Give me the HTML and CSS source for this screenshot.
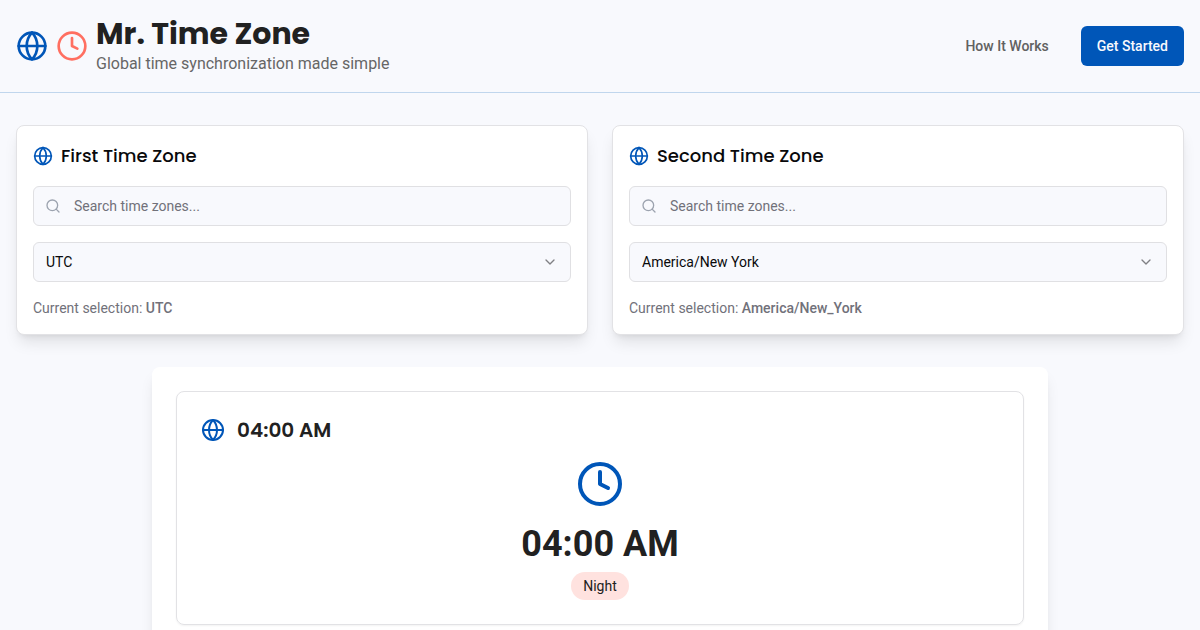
FILE: index.html
```html
<!DOCTYPE html>
<html lang="en">
  <head>
    <meta charset="UTF-8" />
    <meta name="viewport" content="width=device-width, initial-scale=1" />
    <title>Mr. Time Zone</title>
    <link rel="stylesheet" href="styles.css">
  </head>
  <body>
    <svg class="sprite" aria-hidden="true">
      <symbol id="globe" viewBox="0 0 24 24">
        <circle cx="12" cy="12" r="10" />
        <path d="M12 2a14.5 14.5 0 0 0 0 20 14.5 14.5 0 0 0 0-20" />
        <path d="M2 12h20" />
      </symbol>
      <symbol id="clock" viewBox="0 0 24 24">
        <circle cx="12" cy="12" r="10" />
        <polyline points="12 6 12 12 16 14" />
      </symbol>
      <symbol id="search" viewBox="0 0 24 24">
        <circle cx="11" cy="11" r="8" />
        <path d="m21 21-4.3-4.3" />
      </symbol>
      <symbol id="chevron" viewBox="0 0 24 24">
        <path d="m6 9 6 6 6-6" />
      </symbol>
    </svg>

    <header class="header">
      <div class="brand">
        <svg class="icon icon-lg blue"><use href="#globe" /></svg>
        <svg class="icon icon-lg coral"><use href="#clock" /></svg>
        <div>
          <h1>Mr. Time Zone</h1>
          <p>Global time synchronization made simple</p>
        </div>
      </div>
      <nav class="nav">
        <a href="#how">How It Works</a>
        <button type="button" class="btn">Get Started</button>
      </nav>
    </header>

    <main class="main">
      <div class="zones">
        <section class="card">
          <h2><svg class="icon icon-sm blue"><use href="#globe" /></svg>First Time Zone</h2>
          <div class="field">
            <svg class="icon icon-xs search-icon"><use href="#search" /></svg>
            <input type="text" placeholder="Search time zones..." aria-label="Search first time zone" />
          </div>
          <div class="field">
            <select aria-label="First time zone">
              <option>UTC</option>
            </select>
            <svg class="icon icon-xs chevron-icon"><use href="#chevron" /></svg>
          </div>
          <p class="selection">Current selection: <strong>UTC</strong></p>
        </section>

        <section class="card">
          <h2><svg class="icon icon-sm blue"><use href="#globe" /></svg>Second Time Zone</h2>
          <div class="field">
            <svg class="icon icon-xs search-icon"><use href="#search" /></svg>
            <input type="text" placeholder="Search time zones..." aria-label="Search second time zone" />
          </div>
          <div class="field">
            <select aria-label="Second time zone">
              <option>America/New York</option>
            </select>
            <svg class="icon icon-xs chevron-icon"><use href="#chevron" /></svg>
          </div>
          <p class="selection">Current selection: <strong>America/New_York</strong></p>
        </section>
      </div>

      <div class="result">
        <section class="time-card">
          <h3><svg class="icon icon-md blue"><use href="#globe" /></svg>04:00 AM</h3>
          <svg class="icon icon-xl blue"><use href="#clock" /></svg>
          <div class="time">04:00 AM</div>
          <span class="badge">Night</span>
        </section>
      </div>
    </main>
  </body>
</html>
```

FILE: styles.css
```css
* {
  box-sizing: border-box;
  margin: 0;
}

body {
  background-color: #f8f9fd;
  color: #09090b;
  font-family: Roboto, sans-serif;
  font-size: 16px;
  line-height: 24px;
}

h1,
h2,
h3 {
  font-family: Poppins, Inter, sans-serif;
}

.sprite {
  display: none;
}

.icon {
  display: block;
  flex-shrink: 0;
  fill: none;
  stroke: currentColor;
  stroke-width: 2;
  stroke-linecap: round;
  stroke-linejoin: round;
}

.icon-xs {
  width: 16px;
  height: 16px;
}

.icon-sm {
  width: 20px;
  height: 20px;
}

.icon-md {
  width: 24px;
  height: 24px;
}

.icon-lg {
  width: 32px;
  height: 32px;
}

.icon-xl {
  width: 48px;
  height: 48px;
}

.blue {
  color: #0056b8;
}

.coral {
  color: #ff6f61;
}

.header {
  display: flex;
  align-items: center;
  justify-content: space-between;
  padding: 16px;
  border-bottom: 1px solid #c0d6ed;
}

.brand {
  display: flex;
  align-items: center;
  gap: 8px;
}

.brand h1 {
  font-size: 30px;
  font-weight: 700;
  line-height: 36px;
  color: #212121;
}

.brand p {
  color: #666666;
}

.nav {
  display: flex;
  align-items: center;
  gap: 32px;
  font-size: 14px;
  font-weight: 500;
}

.nav a {
  color: #616161;
  text-decoration: none;
}

.btn {
  height: 40px;
  padding: 0 16px;
  border: none;
  border-radius: 6px;
  background-color: #0056b8;
  color: #f8f9fd;
  font: inherit;
}

.main {
  padding: 32px 16px;
}

.zones {
  display: grid;
  grid-template-columns: 1fr 1fr;
  gap: 24px;
  margin-bottom: 32px;
}

.card {
  display: flex;
  flex-direction: column;
  gap: 16px;
  padding: 16px;
  border: 1px solid #e2e2e5;
  border-radius: 8px;
  background-color: white;
  box-shadow: 0 10px 15px -3px rgba(0, 0, 0, 0.1), 0 4px 6px -4px rgba(0, 0, 0, 0.1);
}

.card h2 {
  display: flex;
  align-items: center;
  gap: 8px;
  font-size: 18px;
  font-weight: 500;
  line-height: 28px;
}

.field {
  position: relative;
}

.field input,
.field select {
  display: block;
  width: 100%;
  height: 40px;
  padding: 0 12px;
  border: 1px solid #e0e0e3;
  border-radius: 6px;
  background-color: #f8f9fd;
  color: #09090b;
  font-family: inherit;
  font-size: 14px;
  appearance: none;
}

.field input {
  padding-left: 40px;
}

.field input::placeholder {
  color: #71717a;
}

.search-icon,
.chevron-icon {
  position: absolute;
  top: 12px;
  pointer-events: none;
}

.search-icon {
  left: 12px;
  color: #9ca3af;
}

.chevron-icon {
  right: 13px;
  color: #808084;
}

.selection {
  font-size: 14px;
  line-height: 20px;
  color: #71717a;
}

.selection strong {
  font-weight: 500;
}

.result {
  max-width: 896px;
  margin: 0 auto;
  padding: 24px;
  border-radius: 8px;
  background-color: white;
  box-shadow: 0 10px 15px -3px rgba(0, 0, 0, 0.1), 0 4px 6px -4px rgba(0, 0, 0, 0.1);
}

.time-card {
  display: flex;
  flex-direction: column;
  align-items: center;
  padding: 24px;
  border: 1px solid #e2e2e5;
  border-radius: 8px;
  color: #212121;
  box-shadow: 0 1px 2px rgba(0, 0, 0, 0.05);
}

.time-card h3 {
  display: flex;
  align-items: center;
  align-self: flex-start;
  gap: 12px;
  margin-bottom: 16px;
  font-size: 20px;
  font-weight: 600;
  line-height: 28px;
}

.time {
  margin: 16px 0 8px;
  font-size: 36px;
  font-weight: 700;
  line-height: 40px;
}

.badge {
  padding: 4px 12px;
  border-radius: 14px;
  background-color: #ffe2df;
  font-size: 14px;
  line-height: 20px;
}
```
